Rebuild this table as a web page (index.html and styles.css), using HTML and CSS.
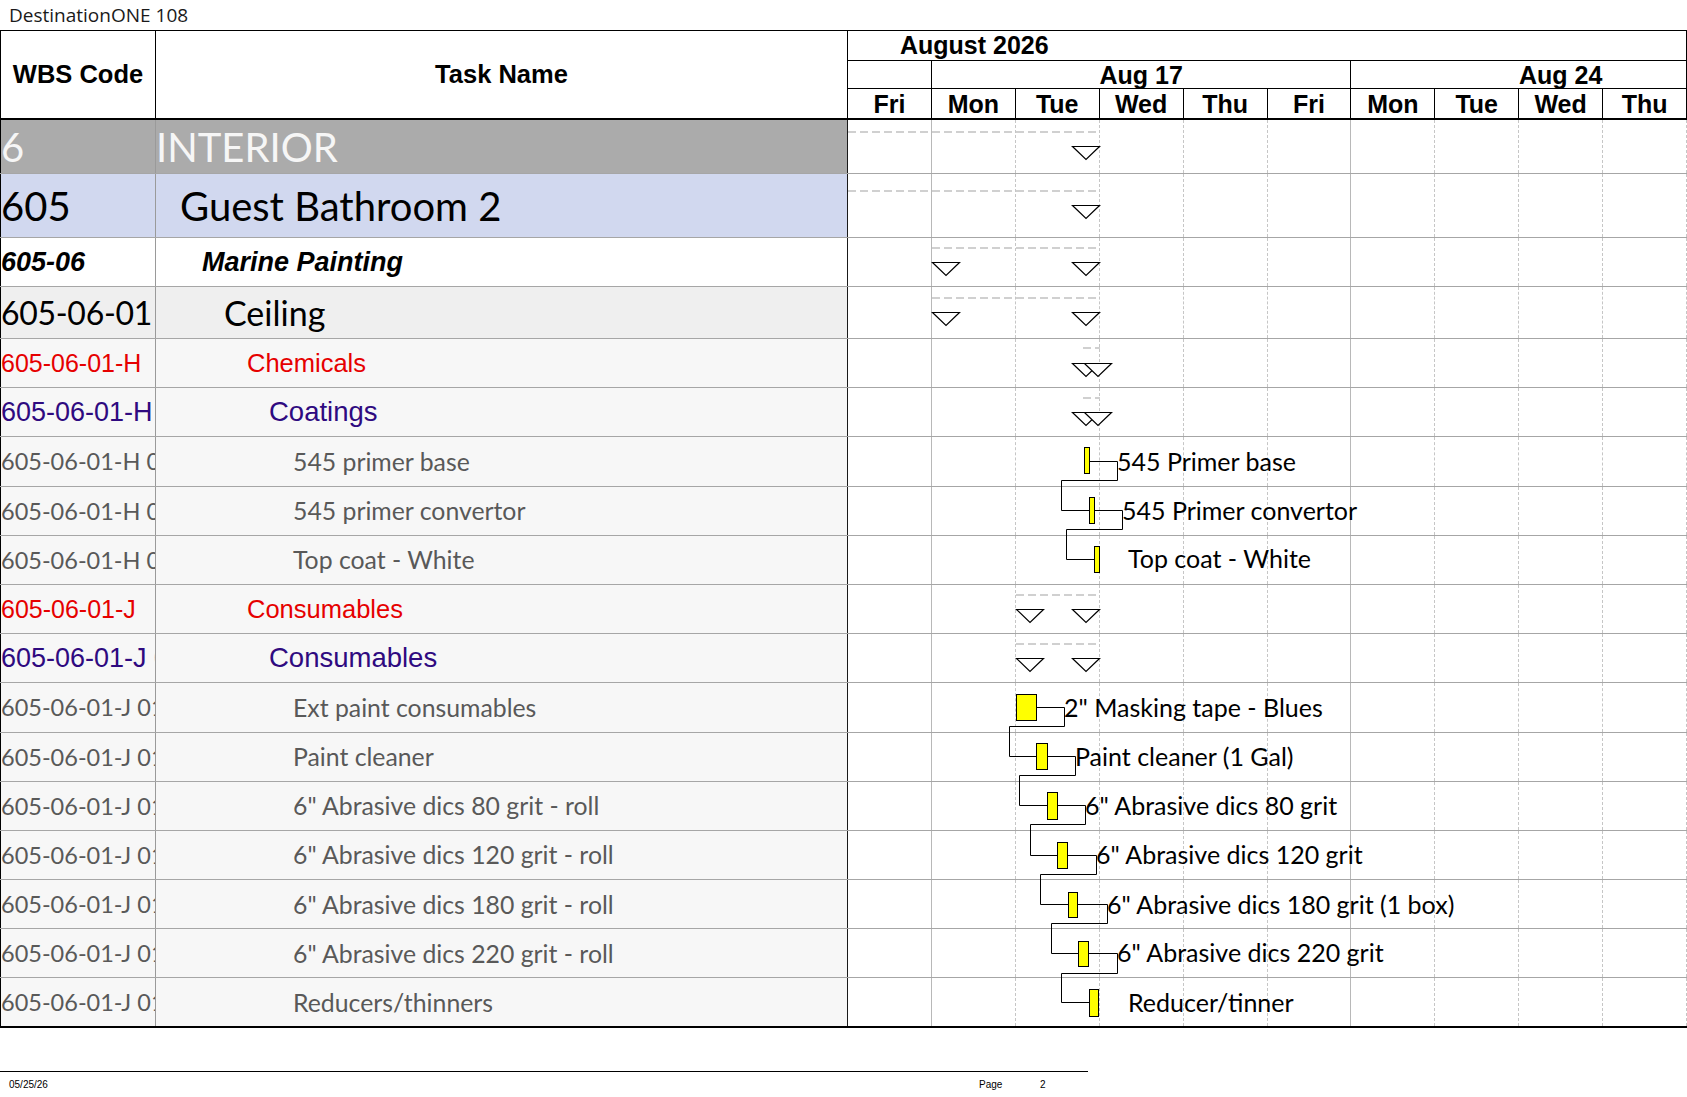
FILE: index.html
```html
<!DOCTYPE html>
<html lang="en">
<head>
<meta charset="utf-8">
<title>DestinationONE 108</title>
<link rel="stylesheet" href="styles.css">
</head>
<body>
<div class="doc-title">DestinationONE 108</div>
<div class="chart">
  <div class="head">
    <div class="h-cell h-wbs">WBS Code</div>
    <div class="h-cell h-task">Task Name</div>
    <div class="h-time">
      <div class="h-month">August 2026</div>
      <div class="h-weeks">
        <div class="wk wk-lead"></div>
        <div class="wk">Aug 17</div>
        <div class="wk">Aug 24</div>
      </div>
      <div class="h-days">
        <div>Fri</div><div>Mon</div><div>Tue</div><div>Wed</div><div>Thu</div>
        <div>Fri</div><div>Mon</div><div>Tue</div><div>Wed</div><div>Thu</div>
      </div>
    </div>
  </div>
  <div class="body">
    <div class="row r-l1"><div class="wbs">6</div><div class="task">INTERIOR</div><div class="tl"><i></i><i></i><i></i><i></i><i></i><i></i><i></i><i></i><i></i><i></i></div></div>
    <div class="row r-l2"><div class="wbs">605</div><div class="task">Guest Bathroom 2</div><div class="tl"><i></i><i></i><i></i><i></i><i></i><i></i><i></i><i></i><i></i><i></i></div></div>
    <div class="row r-l3"><div class="wbs">605-06</div><div class="task">Marine Painting</div><div class="tl"><i></i><i></i><i></i><i></i><i></i><i></i><i></i><i></i><i></i><i></i></div></div>
    <div class="row r-l4"><div class="wbs">605-06-01</div><div class="task">Ceiling</div><div class="tl"><i></i><i></i><i></i><i></i><i></i><i></i><i></i><i></i><i></i><i></i></div></div>
    <div class="row r-l5"><div class="wbs">605-06-01-H</div><div class="task">Chemicals</div><div class="tl"><i></i><i></i><i></i><i></i><i></i><i></i><i></i><i></i><i></i><i></i></div></div>
    <div class="row r-l6"><div class="wbs">605-06-01-H 01</div><div class="task">Coatings</div><div class="tl"><i></i><i></i><i></i><i></i><i></i><i></i><i></i><i></i><i></i><i></i></div></div>
    <div class="row r-item"><div class="wbs">605-06-01-H 01-01</div><div class="task">545 primer base</div><div class="tl"><i></i><i></i><i></i><i></i><i></i><i></i><i></i><i></i><i></i><i></i></div></div>
    <div class="row r-item"><div class="wbs">605-06-01-H 01-02</div><div class="task">545 primer convertor</div><div class="tl"><i></i><i></i><i></i><i></i><i></i><i></i><i></i><i></i><i></i><i></i></div></div>
    <div class="row r-item"><div class="wbs">605-06-01-H 01-03</div><div class="task">Top coat - White</div><div class="tl"><i></i><i></i><i></i><i></i><i></i><i></i><i></i><i></i><i></i><i></i></div></div>
    <div class="row r-l5"><div class="wbs">605-06-01-J</div><div class="task">Consumables</div><div class="tl"><i></i><i></i><i></i><i></i><i></i><i></i><i></i><i></i><i></i><i></i></div></div>
    <div class="row r-l6"><div class="wbs">605-06-01-J 01</div><div class="task">Consumables</div><div class="tl"><i></i><i></i><i></i><i></i><i></i><i></i><i></i><i></i><i></i><i></i></div></div>
    <div class="row r-item"><div class="wbs">605-06-01-J 01-01</div><div class="task">Ext paint consumables</div><div class="tl"><i></i><i></i><i></i><i></i><i></i><i></i><i></i><i></i><i></i><i></i></div></div>
    <div class="row r-item"><div class="wbs">605-06-01-J 01-02</div><div class="task">Paint cleaner</div><div class="tl"><i></i><i></i><i></i><i></i><i></i><i></i><i></i><i></i><i></i><i></i></div></div>
    <div class="row r-item"><div class="wbs">605-06-01-J 01-03</div><div class="task">6" Abrasive dics 80 grit - roll</div><div class="tl"><i></i><i></i><i></i><i></i><i></i><i></i><i></i><i></i><i></i><i></i></div></div>
    <div class="row r-item"><div class="wbs">605-06-01-J 01-04</div><div class="task">6" Abrasive dics 120 grit - roll</div><div class="tl"><i></i><i></i><i></i><i></i><i></i><i></i><i></i><i></i><i></i><i></i></div></div>
    <div class="row r-item"><div class="wbs">605-06-01-J 01-05</div><div class="task">6" Abrasive dics 180 grit - roll</div><div class="tl"><i></i><i></i><i></i><i></i><i></i><i></i><i></i><i></i><i></i><i></i></div></div>
    <div class="row r-item"><div class="wbs">605-06-01-J 01-06</div><div class="task">6" Abrasive dics 220 grit - roll</div><div class="tl"><i></i><i></i><i></i><i></i><i></i><i></i><i></i><i></i><i></i><i></i></div></div>
    <div class="row r-item r-last"><div class="wbs">605-06-01-J 01-07</div><div class="task">Reducers/thinners</div><div class="tl"><i></i><i></i><i></i><i></i><i></i><i></i><i></i><i></i><i></i><i></i></div></div>

    <svg class="gantt" viewBox="848 120 839 910" width="839" height="910" xmlns="http://www.w3.org/2000/svg">
      <g class="sum">
        <line x1="848" y1="132" x2="1100" y2="132"/>
        <line x1="848" y1="191" x2="1100" y2="191"/>
        <line x1="932" y1="248" x2="1100" y2="248"/>
        <line x1="932" y1="298" x2="1100" y2="298"/>
        <line x1="1083" y1="348" x2="1100" y2="348"/>
        <line x1="1083" y1="398" x2="1100" y2="398"/>
        <line x1="1016" y1="595" x2="1100" y2="595"/>
        <line x1="1016" y1="644" x2="1100" y2="644"/>
      </g>
      <g class="tri">
        <polygon points="1072.5,146.5 1099.5,146.5 1086,159.5"/>
        <polygon points="1072.5,205.5 1099.5,205.5 1086,218.5"/>
        <polygon points="932.5,262.5 959.5,262.5 946,275.5"/>
        <polygon points="1072.5,262.5 1099.5,262.5 1086,275.5"/>
        <polygon points="932.5,312.5 959.5,312.5 946,325.5"/>
        <polygon points="1072.5,312.5 1099.5,312.5 1086,325.5"/>
        <polygon points="1072.5,363.5 1099.5,363.5 1086,376.5"/>
        <polygon points="1084.5,363.5 1111.5,363.5 1098,376.5"/>
        <polygon points="1072.5,412.5 1099.5,412.5 1086,425.5"/>
        <polygon points="1084.5,412.5 1111.5,412.5 1098,425.5"/>
        <polygon points="1016.5,609.5 1043.5,609.5 1030,622.5"/>
        <polygon points="1072.5,609.5 1099.5,609.5 1086,622.5"/>
        <polygon points="1016.5,658.5 1043.5,658.5 1030,671.5"/>
        <polygon points="1072.5,658.5 1099.5,658.5 1086,671.5"/>
      </g>
      <g class="link">
        <polyline points="1089.5,461.5 1117.5,461.5 1117.5,480.5 1061.5,480.5 1061.5,510.5 1089.5,510.5"/>
        <polyline points="1094.5,510.5 1122.5,510.5 1122.5,529.5 1066.5,529.5 1066.5,559.5 1094.5,559.5"/>
        <polyline points="1036.5,707.5 1064.5,707.5 1064.5,726.5 1009.5,726.5 1009.5,756.5 1036.5,756.5"/>
        <polyline points="1047.5,756.5 1075.5,756.5 1075.5,775.5 1019.5,775.5 1019.5,805.5 1047.5,805.5"/>
        <polyline points="1057.5,805.5 1085.5,805.5 1085.5,824.5 1030.5,824.5 1030.5,855.5 1057.5,855.5"/>
        <polyline points="1067.5,855.5 1096.5,855.5 1096.5,874.5 1040.5,874.5 1040.5,904.5 1068.5,904.5"/>
        <polyline points="1077.5,904.5 1107.5,904.5 1107.5,923.5 1051.5,923.5 1051.5,953.5 1078.5,953.5"/>
        <polyline points="1088.5,953.5 1117.5,953.5 1117.5,973.5 1061.5,973.5 1061.5,1002.5 1089.5,1002.5"/>
      </g>
      <g class="bar">
        <rect x="1084.5" y="447.5" width="5" height="26"/>
        <rect x="1089.5" y="497.5" width="5" height="26"/>
        <rect x="1094.5" y="546.5" width="5" height="26"/>
        <rect x="1016.5" y="694.5" width="20" height="26"/>
        <rect x="1036.5" y="743.5" width="11" height="26"/>
        <rect x="1047.5" y="792.5" width="10" height="27"/>
        <rect x="1057.5" y="842.5" width="10" height="26"/>
        <rect x="1068.5" y="892.5" width="9" height="25"/>
        <rect x="1078.5" y="941.5" width="10" height="25"/>
        <rect x="1089.5" y="989.5" width="9" height="27"/>
      </g>
      <g class="lbl">
        <text x="1117" y="471">545 Primer base</text>
        <text x="1122" y="520">545 Primer convertor</text>
        <text x="1128" y="568">Top coat - White</text>
        <text x="1064" y="717">2" Masking tape - Blues</text>
        <text x="1075" y="766">Paint cleaner (1 Gal)</text>
        <text x="1085" y="815">6" Abrasive dics 80 grit</text>
        <text x="1096" y="864">6" Abrasive dics 120 grit</text>
        <text x="1107" y="914">6" Abrasive dics 180 grit (1 box)</text>
        <text x="1117" y="962">6" Abrasive dics 220 grit</text>
        <text x="1128" y="1012">Reducer/tinner</text>
      </g>
    </svg>
  </div>
</div>
<div class="footer">
  <div class="f-row"><span>05/25/26</span><span>Page</span><span>2</span></div>
</div>
</body>
</html>
```

FILE: styles.css
```css
* { box-sizing: border-box; }
html, body { margin: 0; padding: 0; background: #fff; }
body {
  width: 1687px;
  height: 1097px;
  overflow: hidden;
  font-family: "Liberation Sans", Arial, sans-serif;
  color: #000;
}

.doc-title {
  height: 30px;
  padding-left: 9px;
  font-family: "Open Sans", sans-serif;
  font-size: 19px;
  line-height: 30px;
  color: #1a1a1a;
}

/* ---------- header ---------- */
.head {
  display: flex;
  height: 90px;
  border-top: 1px solid #000;
  border-bottom: 2px solid #000;
}
.h-cell {
  display: flex;
  align-items: center;
  justify-content: center;
  font-weight: bold;
  font-size: 25.5px;
}
.h-wbs { width: 156px; flex: none; border-left: 1px solid #000; border-right: 1px solid #000; }
.h-task { width: 692px; flex: none; border-right: 1px solid #000; }
.h-time {
  width: 839px;
  flex: none;
  display: flex;
  flex-direction: column;
  font-weight: bold;
  font-size: 25px;
}
.h-month {
  height: 30px;
  padding-left: 52px;
  line-height: 29px;
  border-bottom: 1px solid #000;
  border-right: 1px solid #000;
}
.h-weeks {
  height: 28px;
  display: flex;
  overflow: hidden;
  border-bottom: 1px solid #000;
  border-right: 1px solid #000;
}
.wk {
  flex: none;
  width: 419.5px;
  line-height: 28px;
  text-align: center;
  border-right: 1px solid #000;
}
.wk-lead { width: 83.9px; }
.h-days {
  height: 29px;
  display: grid;
  grid-template-columns: repeat(10, 1fr);
}
.h-days div {
  line-height: 30px;
  text-align: center;
  border-right: 1px solid #000;
}

/* ---------- body rows ---------- */
.body { position: relative; }
.row {
  display: flex;
  height: 49.2px;
  border-bottom: 1px solid #a6a6a6;
}
.wbs, .task {
  flex: none;
  display: flex;
  align-items: center;
  white-space: nowrap;
  overflow: hidden;
}
.wbs {
  width: 156px;
  border-left: 1px solid #000;
  border-right: 1px solid #9a9a9a;
}
.task {
  width: 692px;
  border-right: 1px solid #1a1a1a;
}
.tl {
  flex: none;
  width: 839px;
  display: grid;
  grid-template-columns: repeat(10, 1fr);
  background: #fff;
}
.tl i { border-right: 1px dashed #c6c6c6; }
.tl i:nth-child(5n+1) { border-right: 1px solid #b8b8b8; }

.r-l1 { height: 54px; }
.r-l1 .wbs, .r-l1 .task {
  background: #ababab;
  color: #f6f6f6;
  font-family: Lato, sans-serif;
  font-size: 40px;
}

.r-l2 { height: 64px; }
.r-l2 .wbs, .r-l2 .task {
  background: #d1d8ef;
  font-family: Lato, sans-serif;
  font-size: 40px;
}
.r-l2 .task { padding-left: 24px; }

.r-l3 { height: 49px; }
.r-l3 .wbs, .r-l3 .task {
  background: #fff;
  font-weight: bold;
  font-style: italic;
  font-size: 27px;
}
.r-l3 .task { padding-left: 46px; }

.r-l4 { height: 52px; }
.r-l4 .wbs, .r-l4 .task {
  background: #efefef;
  font-family: Lato, sans-serif;
  font-size: 34px;
}
.r-l4 .wbs { font-size: 32px; letter-spacing: -0.3px; }
.r-l4 .task { padding-left: 68px; }

.r-l5 .wbs, .r-l5 .task {
  background: #f7f7f7;
  color: #e60000;
  font-size: 25px;
}
.r-l5 .task { font-size: 25.5px; padding-left: 91px; }

.r-l6 .wbs, .r-l6 .task {
  background: #f7f7f7;
  color: #2f0a80;
  font-size: 27px;
}
.r-l6 .task { font-size: 27.5px; padding-left: 113px; }

.r-item .wbs, .r-item .task {
  background: #f7f7f7;
  color: #595959;
  font-family: Lato, sans-serif;
  font-size: 24.8px;
}
.r-item .wbs { font-size: 23.5px; }
.r-item .task { padding-left: 137px; }

.r-last { border-bottom: 2px solid #000; }

/* ---------- gantt overlay ---------- */
.gantt {
  position: absolute;
  left: 848px;
  top: 0;
  overflow: visible;
}
.sum line { stroke: #d0d0d0; stroke-width: 2; stroke-dasharray: 8 4; }
.tri polygon { fill: #fff; stroke: #000; stroke-width: 1.2; }
.link polyline { fill: none; stroke: #000; stroke-width: 1; }
.bar rect { fill: #ffff00; stroke: #000; stroke-width: 1; }
.lbl text { font-family: Lato, sans-serif; font-size: 25px; fill: #000; }

/* ---------- footer ---------- */
.footer {
  margin-top: 43px;
  width: 1088px;
  border-top: 1.5px solid #000;
}
.f-row {
  display: grid;
  grid-template-columns: 970px 61px auto;
  padding-left: 9px;
  padding-top: 7px;
  font-size: 10px;
  line-height: 12px;
}
```
